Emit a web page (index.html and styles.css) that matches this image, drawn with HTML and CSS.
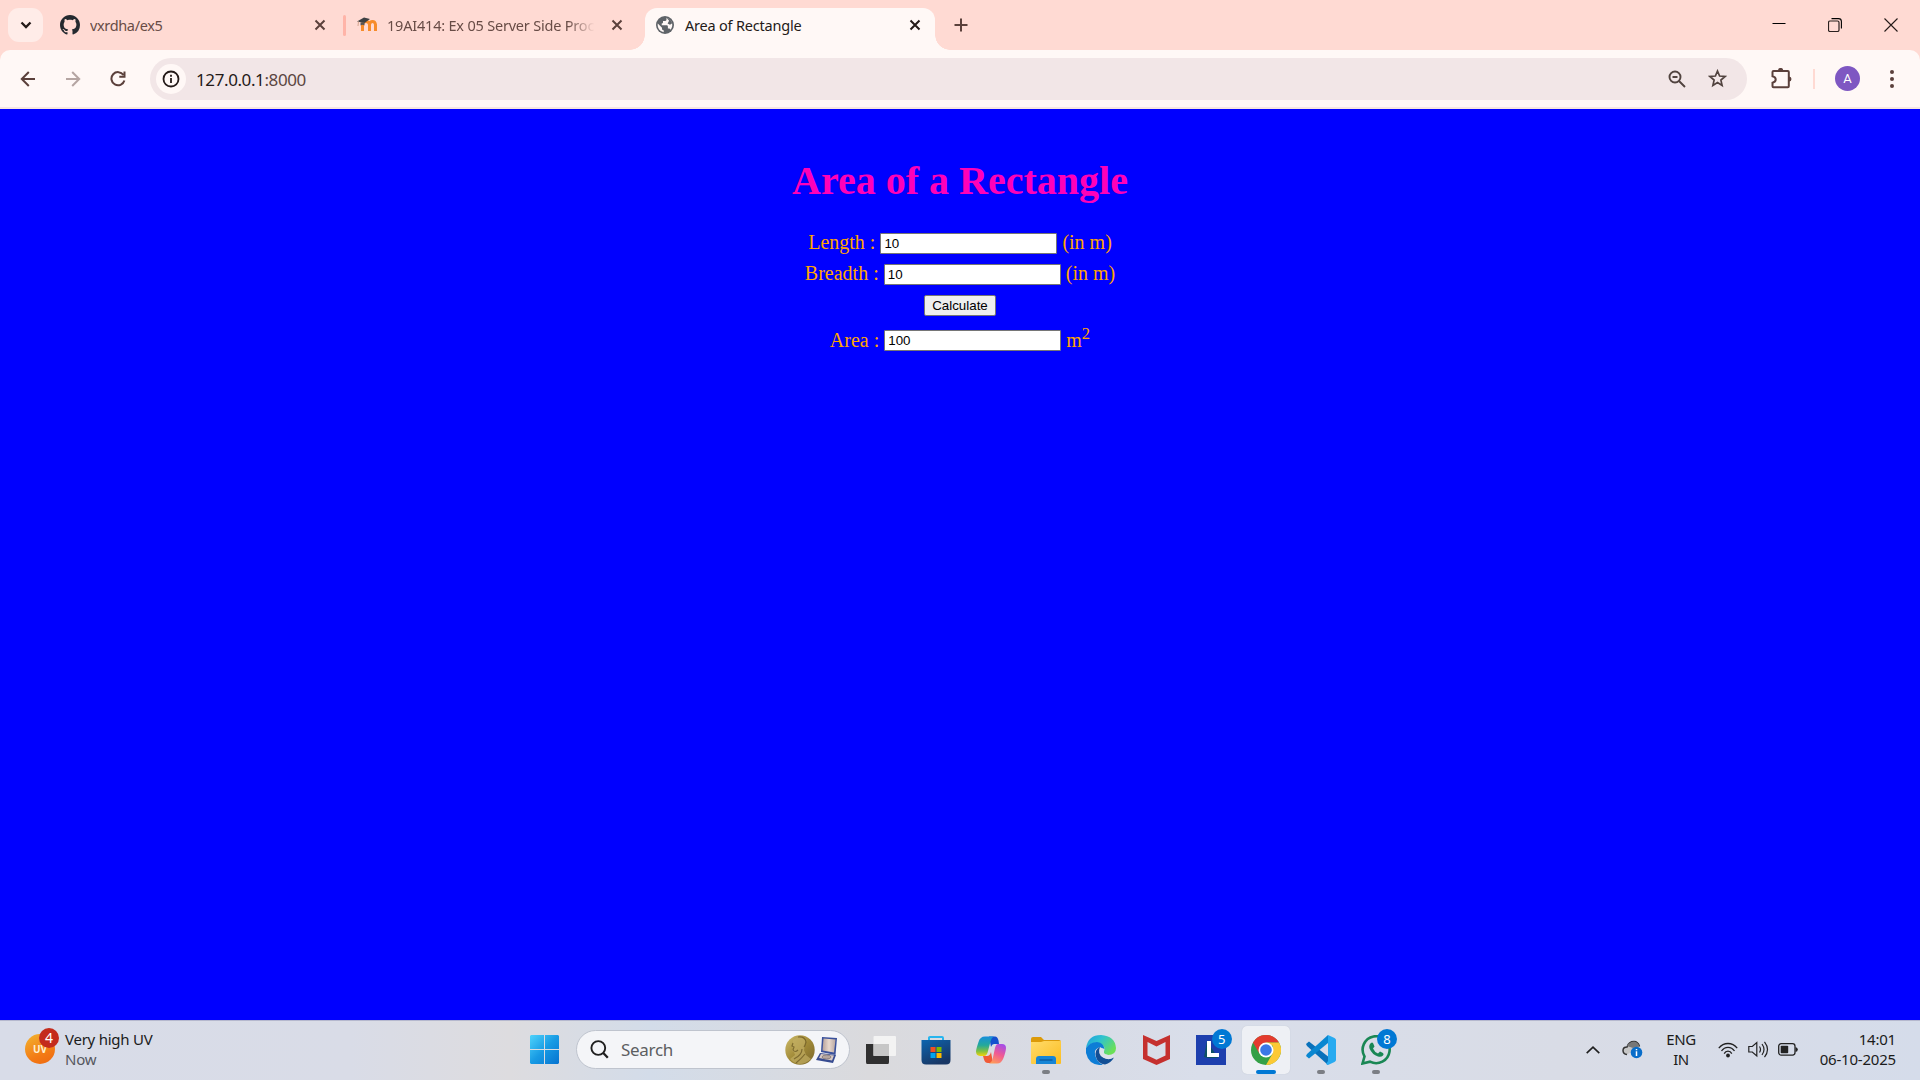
FILE: index.html
```html
<!DOCTYPE html>
<html lang="en">
<head>
<meta charset="utf-8">
<title>Area of Rectangle</title>
<link rel="stylesheet" href="styles.css">
</head>
<body>
<header class="tabstrip">
  <button class="tab-search" aria-label="Search tabs"><svg width="12" height="8" viewBox="0 0 12 8"><path d="M1.5 1.5 6 6l4.500-4.500" fill="none" stroke="#241a18" stroke-width="2.300"/></svg></button>
  <div class="tab tab-first">
    <svg class="favicon" width="20" height="20" viewBox="0 0 16 16"><path fill="#24292f" d="M8 0C3.580 0 0 3.580 0 8c0 3.540 2.290 6.530 5.470 7.590.4.070.55-.17.55-.38 0-.19-.01-.82-.01-1.490-2.010.37-2.530-.49-2.690-.94-.09-.23-.48-.94-.82-1.130-.28-.15-.68-.52-.01-.53.63-.01 1.080.58 1.230.82.72 1.210 1.870.87 2.330.66.07-.52.28-.87.51-1.070-1.780-.2-3.640-.89-3.640-3.950 0-.87.31-1.590.82-2.150-.08-.2-.36-1.020.08-2.120 0 0 .67-.21 2.200.82.64-.18 1.320-.27 2-.27s1.360.09 2 .27c1.530-1.040 2.200-.82 2.200-.82.44 1.100.16 1.920.08 2.120.51.56.82 1.270.82 2.150 0 3.070-1.870 3.750-3.650 3.950.29.25.54.73.54 1.480 0 1.070-.01 1.930-.01 2.200 0 .21.15.46.55.38A8.010 8.010 0 0 0 16 8c0-4.420-3.580-8-8-8z"/></svg>
    <span class="tab-title t-one">vxrdha/ex5</span>
    <svg class="close" width="12" height="12" viewBox="0 0 12 12"><path d="m1.500 1.500 9 9m0-9-9 9"/></svg>
  </div>
  <i class="tab-divider"></i>
  <div class="tab tab-second">
    <svg class="favicon" width="20" height="16" viewBox="0 0 20 16"><path d="M5.500 14V7.500Q6 4.500 9 4.500t3.500 3V14m0-6.500q.5-3 3-3t3 3V14" fill="none" stroke="#f78c2b" stroke-width="3"/><path d="M0 4.500 7 .5l6 1.500-5.500 4z" fill="#3e4144"/><path d="M1.500 4.500 1 9" stroke="#d4a58f"/><path d="M3.500 5.500v3q2-1.500 4 0V5z" fill="#555"/></svg>
    <span class="tab-title t-two">19AI414: Ex 05 Server Side Proce</span>
    <svg class="close" width="12" height="12" viewBox="0 0 12 12"><path d="m1.500 1.500 9 9m0-9-9 9"/></svg>
  </div>
  <div class="tab tab-active">
    <svg class="favicon" width="18" height="18" viewBox="0 0 18 18"><circle cx="9" cy="9" r="9" fill="#5f6368"/><path d="M10.500 1.800v1.700q0 1.500-1.700 1.500H7v1.500q0 1-1.300 1v1.700h5q1.200 0 1.200 1.300v2h1q1.200 0 1.700 1.200A7.400 7.400 0 0 0 10.500 1.800zM1.800 7.600 6 11.700v1q0 1.500 1.700 1.500v2.100a7.400 7.400 0 0 1-5.900-8.700z" fill="#fff8f6"/><path d="M10.500 1.800q4.400 1 5.700 5.400l-2.200 1.600-2.400-1.200 1.500-2.800z" fill="#5f6368"/></svg>
    <span class="tab-title t-three">Area of Rectangle</span>
    <svg class="close" width="12" height="12" viewBox="0 0 12 12"><path d="m1.500 1.500 9 9m0-9-9 9"/></svg>
  </div>
  <svg class="new-tab" width="14" height="14" viewBox="0 0 14 14"><path d="M7 .5v13M.5 7h13" stroke="#5b403b" stroke-width="2"/></svg>
  <div class="window-controls">
    <svg width="14" height="14" viewBox="0 0 14 14"><path d="M.5 5.500h13" stroke="#000"/></svg>
    <svg width="14" height="14" viewBox="0 0 14 14"><rect x=".5" y="3" width="10.500" height="10.500" rx="1.500" fill="none" stroke="#2a201e" stroke-width="1.200"/><path d="M3.500.6h7q2.900 0 2.900 2.900v7" fill="none" stroke="#000" stroke-width="1.100"/></svg>
    <svg width="14" height="14" viewBox="0 0 14 14"><path d="m.5.5 13 13m0-13-13 13" stroke="#241a18" stroke-width="1.100"/></svg>
  </div>
</header>

<div class="toolbar-wrap">
<nav class="toolbar">
  <svg class="nav-icon" width="16" height="16" viewBox="0 0 16 16"><path d="M15 8H2m6.800-7L1.800 8l7 7"/></svg>
  <svg class="nav-icon disabled" width="16" height="16" viewBox="0 0 16 16"><path d="M1 8h13M7.200 1l7 7-7 7"/></svg>
  <svg class="nav-icon" width="16" height="16" viewBox="0 0 16 16"><path d="M13.500 4A6.600 6.600 0 1 0 14.400 9.500M14.500.5v5.200H9.300"/></svg>
  <div class="omnibox">
    <span class="site-info"><svg width="18" height="18" viewBox="0 0 18 18"><circle cx="9" cy="9" r="7.500" fill="none" stroke="#241a18" stroke-width="1.800"/><path d="M9 8v5M9 4.800v2" stroke="#241a18" stroke-width="1.800"/></svg></span>
    <span class="url">127.0.0.1<span class="port">:8000</span></span>
    <svg class="zoom-icon" width="18" height="18" viewBox="0 0 18 18"><g fill="none" stroke="#51433f" stroke-width="1.900"><circle cx="7" cy="7" r="5.500"/><path d="m11 11 6 6M4.500 7h5"/></g></svg>
    <svg class="star-icon" width="19" height="19" viewBox="0 0 19 19"><path d="m9.500 2 2.100 5 5.400.5-4.100 3.600 1.200 5.300-4.600-2.800-4.600 2.800 1.200-5.300L2 7.500 7.400 7z" fill="none" stroke="#51433f" stroke-width="1.700"/></svg>
  </div>
  <svg class="extensions" width="21" height="21" viewBox="0 0 21 21"><path d="M2.500 3h14.300q1 0 1 1v14.300q0 1-1 1H2.500q-1 0-1-1v-3.600q3.200-.8 3.200-3.200T1.500 8.300V4q0-1 1-1z" fill="none" stroke="#5b403b" stroke-width="2"/><path d="M7 2.500a2.600 2.600 0 0 1 5.200 0zM18 8.600a2.500 2.500 0 0 1 0 5z" fill="#5b403b"/></svg>
  <i class="toolbar-divider"></i>
  <span class="avatar">A</span>
  <svg class="menu" width="4" height="18" viewBox="0 0 4 18" fill="#5b403b"><circle cx="2" cy="2" r="2"/><circle cx="2" cy="9" r="2"/><circle cx="2" cy="16" r="2"/></svg>
</nav>
</div>

<main class="page">
  <h1 class="heading">Area of a Rectangle</h1>
  <form class="form">
    <div class="row row-length"><label for="len">Length :</label><input id="len" class="field" type="text" value="10"><span>(in m)</span></div>
    <div class="row row-breadth"><label for="bre">Breadth :</label><input id="bre" class="field" type="text" value="10"><span>(in m)</span></div>
    <button class="calculate" type="button">Calculate</button>
    <div class="row row-area"><label for="area">Area :</label><input id="area" class="field" type="text" value="100"><span>m<sup>2</sup></span></div>
  </form>
</main>

<footer class="taskbar">
  <div class="weather">
    <div class="uv">UV<b class="badge badge-red">4</b></div>
    <div class="weather-text"><span class="w-one">Very high UV</span><span class="w-two">Now</span></div>
  </div>
  <svg class="start" width="29" height="29" viewBox="0 0 29 29"><defs><linearGradient id="win" x1="0" y1="0" x2="29" y2="29" gradientUnits="userSpaceOnUse"><stop stop-color="#4fd3fb"/><stop offset=".5" stop-color="#189be4"/><stop offset="1" stop-color="#0673d0"/></linearGradient></defs><path fill="url(#win)" d="M1 0h13v14H0V1zM15 0h13l1 1v13H15zM0 15h14v14H1l-1-1zM15 15h14v13l-1 1H15z"/></svg>
  <div class="search">
    <svg width="19" height="19" viewBox="0 0 19 19"><circle cx="8.300" cy="8" r="6.900" fill="none" stroke="#1f1f1f" stroke-width="1.900"/><path d="m13.300 13 4.500 4.700" stroke="#1f1f1f" stroke-width="2.300"/></svg>
    <span class="search-label">Search</span>
    <svg class="highlight" width="54" height="30" viewBox="0 0 54 30"><defs><linearGradient id="gold" x1="0" y1="0" x2="1" y2="1"><stop stop-color="#cfbd6c"/><stop offset=".5" stop-color="#a18a38"/><stop offset="1" stop-color="#79652a"/></linearGradient><linearGradient id="tan" x1="0" x2="1"><stop stop-color="#b7a29c"/><stop offset=".5" stop-color="#e9d9cd"/><stop offset="1" stop-color="#baa8a2"/></linearGradient></defs><circle cx="15" cy="15" r="14.700" fill="url(#gold)"/><path d="M8 5q6-5 11-1 3 3 1 7l-1 4 2 5 5 4q-5 5-12 5-6-1-9-5l5-4-1-3-2-1 1-3-1-1z" fill="#c2ae62" opacity=".7"/><path d="M13 2q7-1 8 5-1 4-2 5M8 8l-1 3 2 1-1 3q2 3 5 0m4-1q0 6-8 10m11-5q-4 5-9 9" fill="none" stroke="#66541f" stroke-width="1.200" opacity=".7"/><path d="m37 2 15 1-1.500 17L36 17z" fill="#3a519b"/><path d="m38.500 3.500 12 1-1.500 13-11.500-2z" fill="url(#tan)"/><path d="m35 18 16 2-3 8-17-3z" fill="#364b91"/><path d="m36 19 13 1.500-2 5-13-2.500z" fill="#d9cbc6"/><ellipse cx="41.500" cy="22" rx="4.500" ry="2" fill="#b4a6a0" stroke="#8e8280"/></svg>
  </div>
  <div class="apps">
    <div class="app"><svg width="30" height="30" viewBox="0 0 30 30"><path d="M0 9h23v18q0 2-1 2H1q-1 0-1-2z" fill="#303030"/><rect x="7.500" y="1" width="22.500" height="20" rx="1" fill="#f4f4f4" opacity=".97"/><path d="M7.500 9H23v12H7.500z" fill="#c7c7c7"/></svg></div>
    <div class="app"><svg width="30" height="30" viewBox="0 0 30 30"><defs><linearGradient id="store" x1="0" y1="0" x2=".5" y2="1"><stop stop-color="#0d65b0"/><stop offset="1" stop-color="#183765"/></linearGradient></defs><path d="M8 8V2.500Q8 2 9 2h12q1 0 1 1v5" fill="none" stroke="#28b5ee" stroke-width="2"/><path d="M.5 5h29v20q0 4.500-4.500 4.500H5Q.5 29.500.5 25z" fill="url(#store)"/><path fill="#f25022" d="M9.500 12h5v5h-5z"/><path fill="#7fba00" d="M15.500 12h5v5h-5z"/><path fill="#00a4ef" d="M9.500 18h5v5h-5z"/><path fill="#ffb900" d="M15.500 18h5v5h-5z"/></svg></div>
    <div class="app"><svg width="30" height="28" viewBox="0 0 30 28"><defs><linearGradient id="cpa" x1="0" y1="0" x2="0" y2="1"><stop stop-color="#178edb"/><stop offset=".45" stop-color="#24a99b"/><stop offset=".75" stop-color="#7fc043"/><stop offset="1" stop-color="#f4d20a"/></linearGradient><linearGradient id="cpb" x1=".7" y1="0" x2=".3" y2="1"><stop stop-color="#a64de6"/><stop offset=".5" stop-color="#f05a93"/><stop offset="1" stop-color="#ff9a5a"/></linearGradient></defs><path d="M13 .5h6q2.500 0 3.500 4L23 8h-5q-2 0-3 3z" fill="#1450ce"/><path d="M9 .5h9q-2.500 1-3.500 5L12 15q-1 5-4 5H4q-4-.500-4-4.500 0-2 2.500-9.500Q4 .5 9 .5z" fill="url(#cpa)"/><path d="M7 20h4q3 0 4-4l2 11h-5q-3 0-4-3.500z" fill="#f05a37"/><path d="M22 8h4q4 0 4 4 0 3-2.500 10-2 5.500-6.500 5.500h-8q2.500-1 3.500-4L19 12q1-4 3-4z" fill="url(#cpb)"/></svg></div>
    <div class="app running"><svg width="30" height="28" viewBox="0 0 30 28"><defs><linearGradient id="folder" x1="0" y1="0" x2="1" y2="1"><stop stop-color="#ffdb6b"/><stop offset="1" stop-color="#fbbd20"/></linearGradient></defs><path d="M0 3q0-2 2-2h8l3 3h15q2 0 2 2v8H0z" fill="#dc9a09"/><path d="M0 6h10l3-1h17v22q0 1-1 1H1q-1 0-1-1z" fill="url(#folder)"/><path d="M5 28v-5q0-3 3-3h14q3 0 3 3v5z" fill="#1685d6"/><path d="M8.500 24h13" stroke="#0b579c" stroke-width="1.300"/></svg></div>
    <div class="app"><svg width="30" height="30" viewBox="0 0 30 30"><defs><linearGradient id="edge" x1="0" y1="0" x2="1" y2=".6"><stop stop-color="#1c9de0"/><stop offset=".45" stop-color="#2fc2cf"/><stop offset="1" stop-color="#6be057"/></linearGradient></defs><path d="M0 13Q2 0 15 0q14 1 15 13 0 7-8 7-5-.500-4-3.500 2-6-4-8Q6 6 0 13z" fill="url(#edge)"/><path d="M0 13q4-6 11-6 7 1 7.500 7Q12 10 9 16q-1 9 8 14Q3 31 0 18z" fill="#0d7dd6"/><path d="M14 12q-6 3-4 10 2 7 9 7.500 6-1.500 9-7-5 3-10 .5-5-3-4-11z" fill="#124f96"/><path d="M14 12q-3 7 3 10.500 6 3 10.500-.5.8 0 .5.500 1-2 .5-3.500-4 2-8 .5-3-.5-2.500-3z" fill="#dce1ea"/></svg></div>
    <div class="app"><svg width="27" height="30" viewBox="0 0 27 30"><path fill="#c5302e" fill-rule="evenodd" d="m0 0 13.500 6L27 0v24l-13.500 6L0 24zM4.500 7v13.500l9 4.300 9-4.300V7l-9 4.500z"/></svg></div>
    <div class="app"><svg width="30" height="30" viewBox="0 0 30 30"><path fill="#1d3fae" d="M0 0h30v30H0z"/><path d="m11 6-3 16 4 1h10z" fill="#0d5064"/><path d="M11 6h4v12h8v4H11z" fill="#fff"/></svg><b class="badge">5</b></div>
    <div class="app current"><svg width="30" height="30" viewBox="0 0 30 30"><circle cx="15" cy="15" r="15" fill="#34a047"/><path d="M2 7.500a15 15 0 0 1 26 0H15L8.500 18.800z" fill="#e33b2e"/><path d="M28 7.500A15 15 0 0 1 15 30l6.500-11.300L22 11l-7-3.500z" fill="#fcc934"/><circle cx="15" cy="15" r="7.500" fill="#fff"/><circle cx="15" cy="15" r="5.800" fill="#3b78e7"/></svg></div>
    <div class="app running"><svg width="30" height="30" viewBox="0 0 30 30"><path d="m0 9 3-2.500 19 15V30L1 11z" fill="#0871bb"/><path d="m0 21 3 2.500L22 8V0L1 19z" fill="#0a87d1"/><path d="m22 0 6.500 3q1.500 1 1.500 2v20q0 1-1.500 2L22 30l-2-1 2-3z" fill="#27aaf0"/></svg></div>
    <div class="app running"><svg width="30" height="30" viewBox="0 0 30 30"><path d="m1.500 28.500 2-7A13.500 13.500 0 1 1 9 26.700z" fill="none" stroke="#198754" stroke-width="2.600"/><path d="M10 8q1-1 2 0l1.500 3.500-1.500 2q1.500 3.500 5 5l2-2 3 1.500q1.200 1 0 2.500-2 2-5 1-6-2-8.500-8-1-3.500 1.500-5.500z" fill="#198754"/></svg><b class="badge">8</b></div>
  </div>
  <div class="tray">
    <svg class="chevron" width="14" height="8" viewBox="0 0 14 8"><path d="m.7 7.200 6.300-6 6.300 6" fill="none" stroke="#1f1f1f" stroke-width="1.600"/></svg>
    <svg class="cloud" width="21" height="19" viewBox="0 0 21 19"><path d="M5 14.500Q1 14 1 10.500T5 7q2-5.500 7-5.500 4 0 5.500 5" fill="#c6c6c6" stroke="#333" stroke-width="1.500"/><path d="M5 6q2-4 7-4.500 4 .5 5.500 5L11 8z" fill="#777"/><circle cx="14.500" cy="12.500" r="5.800" fill="#086dca"/><path d="M14.500 11.300V16m0-7v1.300" stroke="#fff" stroke-width="1.500"/></svg>
    <div class="language"><span>ENG</span><span>IN</span></div>
    <svg class="wifi" width="20" height="16" viewBox="0 0 20 16"><g fill="none" stroke="#222" stroke-width="1.300"><path d="M.8 6.200Q4.500 1.500 10 1.500t9.200 4.700M3.500 9Q6 5.300 10 5.300T16.500 9M6.200 11.600Q7.500 9.200 10 9.200t3.800 2.400"/></g><circle cx="10" cy="13.500" r="1.900" fill="#222"/></svg>
    <svg class="sound" width="21" height="17" viewBox="0 0 21 17"><g fill="none" stroke="#222" stroke-width="1.200"><path d="M.8 5.500h3.500l4.500-4v13.500l-4.500-4H.8zM11.500 5.500q2 3 0 6M14 3q4 5.500 0 11M16.500.8q6 7.700 0 15.400"/></g></svg>
    <svg class="battery" width="20" height="13" viewBox="0 0 20 13"><rect x=".7" y=".7" width="16.300" height="11.400" rx="2.500" fill="none" stroke="#222" stroke-width="1.300"/><rect x="2.700" y="2.700" width="7.500" height="7.500" rx=".8" fill="#222"/><path d="M17.500 4q2.300.5 2.300 2.500t-2.300 2.500z" fill="#222"/></svg>
    <div class="clock"><span class="time">14:01</span><span class="date">06-10-2025</span></div>
  </div>
</footer>
</body>
</html>
```

FILE: styles.css
```css
* { box-sizing: border-box; }
body {
  margin: 0;
  width: 1920px;
  height: 1080px;
  overflow: hidden;
  display: flex;
  flex-direction: column;
  font-family: "Noto Sans", "Open Sans", sans-serif;
  background: #00f;
}
svg { display: block; flex: none; }

/* Tab strip */
.tabstrip { height: 50px; flex: none; display: flex; align-items: center; background: #ffdad3; padding-left: 8px; }
.tab-search { width: 35px; height: 34px; border: 0; border-radius: 11px; background: #ffece8; display: grid; place-items: center; padding: 0; }
.tab { display: flex; align-items: center; }
.tab-first { width: 300px; padding: 0 17px; }
.tab-second { width: 299px; padding: 0 22px 0 11px; }
.tab-active { position: relative; width: 290px; height: 42px; align-self: flex-end; padding: 0 14px 8px 11px; border-radius: 12px 12px 0 0; background: #fff8f6; }
.tab-active::before, .tab-active::after { content: ""; position: absolute; bottom: 0; width: 15px; height: 15px; }
.tab-active::before { left: -15px; background: radial-gradient(circle at 0 0, transparent 14.500px, #fff8f6 15px); }
.tab-active::after { right: -15px; background: radial-gradient(circle at 100% 0, transparent 14.500px, #fff8f6 15px); }
.tab-title { font-size: 14.500px; line-height: 20px; white-space: nowrap; overflow: hidden; color: #684c46; margin-right: auto; }
.t-one { margin-left: 10px; letter-spacing: -.35px; }
.t-two { margin-left: 10px; width: 208px; letter-spacing: -.2px; -webkit-mask-image: linear-gradient(90deg, #000 180px, transparent 208px); mask-image: linear-gradient(90deg, #000 180px, transparent 208px); }
.t-three { margin-left: 11px; letter-spacing: -.2px; color: #241a18; }
.close path { stroke: #5b403b; stroke-width: 2; }
.tab-active .close path { stroke: #241a18; }
.tab-divider { width: 3px; height: 21px; border-radius: 2px; background: #ffb4a8; }
.new-tab { margin-left: 19px; }
.window-controls { margin-left: auto; display: flex; gap: 42px; padding-right: 22px; }

/* Toolbar */
.toolbar-wrap { height: 59px; flex: none; background: #ffdad3; }
.toolbar { height: 59px; display: flex; align-items: center; padding: 0 26px 0 20px; background: #fff8f6; border-radius: 10px 10px 0 0; border-bottom: 2px solid #f5e5e1; }
.nav-icon { margin-right: 29px; }
.nav-icon path { fill: none; stroke: #5b403b; stroke-width: 2; }
.nav-icon.disabled path { stroke: #b5a5a2; }
.omnibox { width: 1597px; height: 42px; margin-left: -5px; border-radius: 21px; background: #f2e6e7; display: flex; align-items: center; padding: 0 20px 0 6px; }
.site-info { width: 30px; height: 30px; border-radius: 50%; background: #fff8f6; display: grid; place-items: center; }
.url { margin-left: 10px; margin-right: auto; padding-top: 1px; font-size: 17px; letter-spacing: -.4px; color: #241a18; }
.port { color: #5b4541; }
.zoom-icon { margin-right: 22px; }
.extensions { margin-left: 24px; }
.toolbar-divider { width: 2px; height: 20px; margin-left: 21px; background: #ffdad3; }
.avatar { width: 25px; height: 25px; margin-left: 20px; border-radius: 50%; background: #7e57c2; color: #fff; font-size: 13px; display: grid; place-items: center; font-family: Roboto, sans-serif; }
.menu { margin-left: auto; }

/* Calculator page */
.page { height: 911px; flex: none; background: #00f; color: #ffa500; font: 20px/30px "Liberation Serif", serif; text-align: center; padding-top: 49px; }
.heading { margin: 0; font-size: 40px; line-height: 46px; color: #ff00b8; }
.form { display: flex; flex-direction: column; align-items: center; }
.row { display: flex; align-items: center; gap: 5px; height: 21px; }
.row label, .row > span { padding-bottom: 4px; }
.row-length { margin-top: 29px; }
.row-breadth { margin-top: 10px; }
.row-area { margin-top: 14px; }
.row-area label, .row-area > span { padding-bottom: 2px; }
.field { width: 177px; height: 21px; padding: 1px 3px; margin: 0; border: 1px solid #767676; border-radius: 1px; background: #fff; color: #000; font: 13.333px "Liberation Sans", sans-serif; }
.calculate { width: 72px; height: 21px; margin: 10px 0 0; padding: 0; border: 1px solid #767676; border-radius: 2px; background: #efefef; color: #000; font: 13.333px "Liberation Sans", sans-serif; }
.row sup { font-size: 16.600px; line-height: 0; }

/* Taskbar */
.taskbar { position: relative; height: 60px; flex: none; display: flex; align-items: center; padding-bottom: 2px; border-top: 1px solid #b5b8ce; background: linear-gradient(90deg, #d8dce8 0, #d9dce7 350px, #dddcdf 510px, #d3dce9 650px, #dadadd 870px, #d8dbe5 1060px, #d9deea 1200px, #d9dce6 1560px, #d5dcea 1920px); color: #1b1b1b; font-size: 15px; line-height: 20px; }
.weather { width: 530px; padding-left: 25px; display: flex; gap: 10px; }
.uv { position: relative; width: 30px; height: 30px; margin-top: 5px; border-radius: 50%; background: linear-gradient(155deg, #f2b42f, #f37a14 65%, #ee6710); color: #fff0cf; font: bold 10px/30px "Noto Sans", sans-serif; text-align: center; }
.badge { position: absolute; top: -3px; right: 1px; width: 20px; height: 20px; border-radius: 50%; background: #0078d4; color: #fff; font: 13px/20px "Noto Sans", sans-serif; text-align: center; }
.badge-red { top: -6px; right: -4px; background: #c42b1c; font-size: 14px; }
.weather-text, .language, .clock { display: flex; flex-direction: column; padding-bottom: 2px; }
.weather-text { letter-spacing: -.25px; }
.w-two { color: #55575e; }
.search { width: 274px; height: 39px; margin-left: 17px; border: 1px solid #bfc4ce; border-radius: 20px; background: #f4f5f8; display: flex; align-items: center; padding: 0 10px 0 13px; }
.search-label { margin: 0 auto 0 12px; font-size: 17px; letter-spacing: -.3px; color: #5c5e61; }
.apps { display: flex; margin-left: 3px; }
.app { position: relative; width: 55.100px; height: 48px; display: grid; place-items: center; }
.app > svg { position: relative; }
.app .badge { top: 3px; right: 7px; }
.running::after, .current::after { content: ""; position: absolute; left: 23.500px; bottom: 0; width: 8px; height: 4px; border-radius: 2px; background: #7b7e84; }
.current::after { left: 17.500px; width: 20px; background: #0078d4; }
.current::before { content: ""; position: absolute; inset: 0 3.500px; border-radius: 5px; background: #eef0f5; box-shadow: 0 0 1px #b8bdc8; }
.tray { margin-left: auto; padding-right: 24px; display: flex; align-items: center; }
.cloud { margin-left: 22px; }
.language { width: 40px; margin-left: 18px; text-align: center; letter-spacing: -.4px; }
.wifi { margin-left: 17px; }
.sound { margin-left: 10px; }
.battery { margin-left: 9px; }
.clock { width: 98px; text-align: right; letter-spacing: -.2px; }
```
